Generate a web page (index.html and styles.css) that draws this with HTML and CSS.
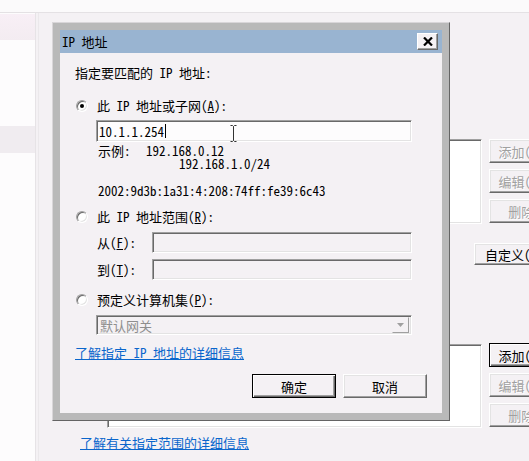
FILE: index.html
```html
<!DOCTYPE html>
<html lang="zh-CN">
<head>
  <meta charset="UTF-8" />
  <meta name="viewport" content="width=device-width, initial-scale=1.0"/>
  <title>IP 地址</title>
  <link rel="stylesheet" href="styles.css">
</head>
<body>

  <!-- Window behind the dialog -->
  <div class="desk">
    <div class="topstrip"></div>
    <div class="panes">
      <div class="sidebar">
        <div class="side-head"></div>
        <div class="side-row"></div>
      </div>
      <div class="main">
        <div class="group">
          <div class="listbox"></div>
          <div class="btn-col">
            <button class="btn disabled">添加(<u>D</u>)...</button>
            <button class="btn disabled">编辑(<u>E</u>)...</button>
            <button class="btn disabled">删除(<u>R</u>)</button>
          </div>
        </div>
        <button class="btn custom">自定义(<u>C</u>)...</button>
        <div class="group second">
          <div class="listbox"></div>
          <div class="btn-col">
            <button class="btn default">添加(<u>A</u>)...</button>
            <button class="btn disabled">编辑(<u>I</u>)...</button>
            <button class="btn disabled">删除(<u>M</u>)</button>
          </div>
        </div>
        <a class="link bottom-link">了解有关指定范围的详细信息</a>
      </div>
    </div>
  </div>

  <!-- IP 地址 dialog -->
  <div class="dialog">
    <div class="titlebar">
      <span>IP 地址</span>
      <button class="close-btn">
        <svg width="10" height="9" viewBox="0 0 10 9">
          <path d="M1 0.5 L9 8.5 M9 0.5 L1 8.5" stroke="#000" stroke-width="2.2"/>
        </svg>
      </button>
    </div>
    <div class="client">
      <div class="prompt">指定要匹配的 IP 地址:</div>

      <div class="option"><span class="radio checked"></span><span>此 IP 地址或子网(<u>A</u>):</span></div>
      <div class="field wide">
        <span>10.1.1.254</span><span class="caret"></span>
        <svg class="ibeam" width="7" height="17" viewBox="0 0 7 17">
          <path d="M0.5 0.5 H2.5 L3.5 1.5 L4.5 0.5 H6.5 M3.5 1.5 V15.5 M0.5 16.5 H2.5 L3.5 15.5 L4.5 16.5 H6.5" stroke="#333" stroke-width="1" fill="none"/>
        </svg>
      </div>
      <div class="examples">
        <div class="ex-line"><span class="ex-label">示例:</span>192.168.0.12</div>
        <div class="ex-line ex-indent">192.168.1.0/24</div>
        <div class="ex-line ex-v6">2002:9d3b:1a31:4:208:74ff:fe39:6c43</div>
      </div>

      <div class="option second"><span class="radio"></span><span>此 IP 地址范围(<u>R</u>):</span></div>
      <div class="range-row first">
        <span class="range-label">从(<u>F</u>):</span>
        <div class="field range disabled"></div>
      </div>
      <div class="range-row">
        <span class="range-label">到(<u>T</u>):</span>
        <div class="field range disabled"></div>
      </div>

      <div class="option second"><span class="radio"></span><span>预定义计算机集(<u>P</u>):</span></div>
      <div class="field select disabled">
        <span class="select-text">默认网关</span>
        <span class="drop-btn">
          <svg width="7" height="4" viewBox="0 0 7 4"><path d="M0 0 H7 L3.5 4 Z" fill="#a0a0a0"/></svg>
        </span>
      </div>

      <a class="link help-link">了解指定 IP 地址的详细信息</a>

      <div class="dialog-buttons">
        <button class="btn default">确定</button>
        <button class="btn">取消</button>
      </div>
    </div>
  </div>

</body>
</html>
```

FILE: styles.css
```css
body {
  margin: 0;
  width: 529px;
  height: 461px;
  overflow: hidden;
  position: relative;
  background: #f4f1f4;
  font-family: "Noto Sans Mono CJK SC", "Noto Sans CJK SC", sans-serif;
  font-size: 13px;
  color: #000;
}

u {
  text-decoration: underline;
}

/* ---------- window behind ---------- */

.topstrip {
  height: 12px;
  background: #fbfafb;
  border-bottom: 1px solid #e4e1e4;
}

.panes {
  display: flex;
  height: 448px;
}

.sidebar {
  width: 35px;
  flex-shrink: 0;
  padding-top: 1px;
  background: #fdfcfd;
  border-right: 1px solid #e6e3e6;
}

.side-head {
  height: 26px;
  background: linear-gradient(#f8eff6, #f3ecf1);
}

.side-row {
  height: 27px;
  margin-top: 86px;
  background: #f0ecf0;
}

.main {
  flex: 1;
  margin-left: 2px;
  border-left: 1px solid #ebe8eb;
  padding: 126px 0 0 41px;
  overflow: hidden;
}

.group {
  display: flex;
  align-items: flex-start;
}

.group.second {
  margin-top: 78px;
}

.listbox {
  width: 375px;
  height: 85px;
  margin-left: 27px;
  flex-shrink: 0;
  box-sizing: border-box;
  background: #fff;
  border: 1px solid;
  border-color: #a0a0a0 #fff #fff #a0a0a0;
  box-shadow: inset 1px 1px #696969, inset -1px -1px #e3e3e3;
}

.group.second .listbox {
  margin-top: 1px;
  height: 84px;
}

.btn-col {
  display: flex;
  flex-direction: column;
  gap: 6px;
  margin-left: 7px;
}

.btn {
  width: 84px;
  height: 24px;
  flex-shrink: 0;
  padding: 0;
  box-sizing: border-box;
  font-family: inherit;
  font-size: 13px;
  color: #000;
  background: #f4f1f4;
  border: 1px solid;
  border-color: #fff #696969 #696969 #fff;
  box-shadow: inset -1px -1px #a0a0a0, inset 1px 1px #e3e3e3;
  white-space: nowrap;
}

.btn.default {
  border: 1px solid #000;
  box-shadow: inset 1px 1px #fff, inset -1px -1px #696969, inset -2px -2px #a0a0a0;
}

.btn.disabled {
  color: #a0a0a0;
  text-shadow: 1px 1px #fff;
}

.btn.custom {
  display: block;
  width: 100px;
  height: 22px;
  margin: 19px 0 0 394px;
}

.link {
  color: #0a66cc;
  text-decoration: underline;
  line-height: 15px;
}

.bottom-link {
  display: block;
  margin-top: 7px;
}

/* ---------- dialog ---------- */

.dialog {
  position: absolute;
  left: 52px;
  top: 22px;
  width: 398px;
  height: 399px;
  box-sizing: border-box;
  padding: 7px;
  background: #b9b9b9;
  border: 1px solid;
  border-color: #d9d6d9 #646464 #646464 #d9d6d9;
}

.titlebar {
  height: 23px;
  display: flex;
  align-items: center;
  justify-content: space-between;
  padding: 0 4px 0 2px;
  background: #99b4d1;
  line-height: 15px;
}

.close-btn {
  width: 21px;
  height: 17px;
  padding: 0;
  display: flex;
  align-items: center;
  justify-content: center;
  box-sizing: border-box;
  background: #f4f1f4;
  border: 1px solid;
  border-color: #fff #696969 #696969 #fff;
  box-shadow: inset -1px -1px #a0a0a0;
}

.client {
  height: 360px;
  box-sizing: border-box;
  padding: 0 15px;
  display: flex;
  flex-direction: column;
  align-items: flex-start;
  background: #f4f1f4;
  line-height: 15px;
}

.prompt {
  margin-top: 12px;
}

.option {
  display: flex;
  align-items: center;
  gap: 9px;
  margin-top: 18px;
  padding-left: 1px;
}

.option.second {
  margin-top: 12px;
}

.radio {
  position: relative;
  width: 12px;
  height: 12px;
  flex-shrink: 0;
  box-sizing: border-box;
  border-radius: 50%;
  background: #fff;
  border: 1px solid;
  border-color: #a0a0a0 #fff #fff #a0a0a0;
  box-shadow: inset 1px 1px #696969, inset -1px -1px #e3e3e3;
}

.radio.checked::after {
  content: "";
  position: absolute;
  left: 3px;
  top: 3px;
  width: 4px;
  height: 4px;
  border-radius: 50%;
  background: #000;
}

.field {
  position: relative;
  box-sizing: border-box;
  display: flex;
  align-items: center;
  padding-left: 2px;
  background: #fdfcfd;
  border: 1px solid;
  border-color: #a0a0a0 #fff #fff #a0a0a0;
  box-shadow: inset 1px 1px #696969, inset -1px -1px #e3e3e3;
}

.field.disabled {
  background: #f4f1f4;
}

.field.wide {
  width: 316px;
  height: 22px;
  margin: 7px 0 0 21px;
}

.caret {
  width: 1px;
  height: 14px;
  margin-left: 1px;
  background: #000;
}

.ibeam {
  position: absolute;
  left: 133px;
  top: 4px;
}

.examples {
  margin: 2px 0 0 23px;
  line-height: 13px;
}

.ex-label {
  display: inline-block;
  width: 48px;
}

.ex-indent {
  padding-left: 81px;
}

.ex-v6 {
  margin-top: 14px;
}

.range-row {
  display: flex;
  align-items: center;
  margin-top: 6px;
}

.range-row.first {
  margin-top: 8px;
}

.range-label {
  width: 55px;
  margin-left: 22px;
}

.field.range {
  width: 260px;
  height: 21px;
}

.field.select {
  width: 316px;
  height: 20px;
  margin: 8px 0 0 21px;
  justify-content: space-between;
  padding: 0 2px 0 3px;
}

.select-text {
  color: #8e8e8e;
}

.drop-btn {
  width: 17px;
  height: 16px;
  box-sizing: border-box;
  display: flex;
  align-items: center;
  justify-content: center;
  background: #f4f1f4;
  border: 1px solid;
  border-color: #f4f1f4 #a0a0a0 #a0a0a0 #f4f1f4;
}

.help-link {
  margin-top: 10px;
}

.dialog-buttons {
  align-self: stretch;
  display: flex;
  justify-content: flex-end;
  gap: 7px;
  margin-top: 14px;
}
```
